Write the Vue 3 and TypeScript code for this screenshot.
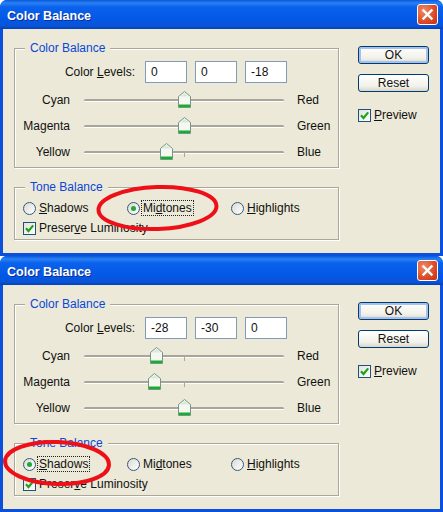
<script setup lang="ts">
interface Mark {
  cx: number
  cy: number
  rx: number
  ry: number
  tilt: number
}

interface Dialog {
  levels: number[]
  tone: string
  mark: Mark
}

const dialogs: Dialog[] = [
  { levels: [0, 0, -18], tone: 'Midtones', mark: { cx: 157.5, cy: 208, rx: 59, ry: 21, tilt: -2 } },
  { levels: [-28, -30, 0], tone: 'Shadows', mark: { cx: 57, cy: 207, rx: 52, ry: 21, tilt: 2 } }
]

const sliders = [
  { left: 'Cyan', right: 'Red' },
  { left: 'Magenta', right: 'Green' },
  { left: 'Yellow', right: 'Blue' }
]

// key is the underlined mnemonic letter
const tones = [
  { name: 'Shadows', pre: '', key: 'S', post: 'hadows' },
  { name: 'Midtones', pre: 'Mi', key: 'd', post: 'tones' },
  { name: 'Highlights', pre: '', key: 'H', post: 'ighlights' }
]

const thumbLeft = (value: number) => `${100 + value}px`
</script>

<template>
  <div class="page">
    <section v-for="(dlg, i) in dialogs" :key="i" class="dialog">
      <header class="titlebar">
        <span class="title">Color Balance</span>
        <button class="close" type="button" aria-label="Close">
          <svg width="13" height="13" viewBox="0 0 13 13">
            <path d="M2.5 2.5 L10.5 10.5 M10.5 2.5 L2.5 10.5" stroke="#fff" stroke-width="2.4" stroke-linecap="square" />
          </svg>
        </button>
      </header>

      <div class="body">
        <div class="main">
          <div class="group color-group">
            <span class="legend">Color Balance</span>
            <div class="levels">
              <span class="levels-label">Color <u>L</u>evels:</span>
              <span v-for="(v, n) in dlg.levels" :key="n" class="field">{{ v }}</span>
            </div>
            <div v-for="(s, n) in sliders" :key="s.left" class="slider-row">
              <span class="slider-left">{{ s.left }}</span>
              <div class="track">
                <i class="tick"></i>
                <svg class="thumb" :style="{ left: thumbLeft(dlg.levels[n]) }" width="13" height="17" viewBox="0 0 13 17">
                  <path d="M6.5 .5 L12.5 5.5 V16.5 H.5 V5.5 Z" fill="#f7f7f2" stroke="#76948a" stroke-linejoin="round" />
                  <path d="M6.5 2 L10.5 5.4 H2.5 Z" fill="#d4ecd4" />
                  <rect x="1" y="13.5" width="11" height="2.5" fill="#12b02c" />
                </svg>
              </div>
              <span class="slider-right">{{ s.right }}</span>
            </div>
          </div>

          <div class="group tone-group">
            <span class="legend">Tone Balance</span>
            <div class="radios">
              <label v-for="t in tones" :key="t.name" class="radio-item">
                <span class="radio" :class="{ on: t.name === dlg.tone }"></span>
                <span class="radio-text" :class="{ focus: t.name === dlg.tone }">{{ t.pre }}<u>{{ t.key }}</u>{{ t.post }}</span>
              </label>
            </div>
            <label class="check-item">
              <span class="check">
                <svg width="11" height="11" viewBox="0 0 11 11">
                  <path d="M2 5.2 L4.5 8 L9.2 2.4" fill="none" stroke="#21a121" stroke-width="2.2" />
                </svg>
              </span>
              <span>Preser<u>v</u>e Luminosity</span>
            </label>
          </div>
        </div>

        <aside class="side">
          <button class="btn default" type="button">OK</button>
          <button class="btn" type="button">Reset</button>
          <label class="check-item">
            <span class="check">
              <svg width="11" height="11" viewBox="0 0 11 11">
                <path d="M2 5.2 L4.5 8 L9.2 2.4" fill="none" stroke="#21a121" stroke-width="2.2" />
              </svg>
            </span>
            <span><u>P</u>review</span>
          </label>
        </aside>
      </div>

      <svg class="mark" width="443" height="256" viewBox="0 0 443 256">
        <ellipse
          :cx="dlg.mark.cx"
          :cy="dlg.mark.cy"
          :rx="dlg.mark.rx"
          :ry="dlg.mark.ry"
          :transform="`rotate(${dlg.mark.tilt} ${dlg.mark.cx} ${dlg.mark.cy})`"
          fill="none"
          stroke="#ee1018"
          stroke-width="4"
        />
      </svg>
    </section>
  </div>
</template>

<style scoped>
.page {
  width: 443px;
  height: 512px;
  overflow: hidden;
  font-family: "Liberation Sans", Arial, sans-serif;
  font-size: 12px;
  color: #111;
}

.dialog {
  position: relative;
  width: 443px;
  height: 256px;
  box-sizing: border-box;
  display: flex;
  flex-direction: column;
  background: #0a50dc;
  border-radius: 7px 7px 0 0;
  overflow: hidden;
}

.titlebar {
  height: 29px;
  flex: none;
  box-sizing: border-box;
  display: flex;
  align-items: center;
  justify-content: space-between;
  padding: 2px 5px 2px 7px;
  background: linear-gradient(#0a58d8 0, #2a80f4 3px, #0a62ec 7px, #0457e6 20px, #0a54d8 26px, #0340b0 29px);
}

.title {
  margin-top: 2px;
  color: #fff;
  font-weight: 700;
  font-size: 12.5px;
  text-shadow: 1px 1px 0 #0a2f90;
}

.close {
  width: 21px;
  height: 21px;
  padding: 0;
  display: flex;
  align-items: center;
  justify-content: center;
  border: 1px solid #fff;
  border-radius: 3px;
  background: radial-gradient(circle at 30% 30%, #ef8a68, #dc4a26 60%, #c23214);
}

.body {
  flex: 1;
  display: flex;
  margin: 0 3px 3px;
  padding: 0 0 0 11px;
  background: #ece9d8;
}

.main {
  width: 325px;
  flex: none;
  padding-top: 19px;
}

.group {
  position: relative;
  box-sizing: border-box;
  border: 1px solid #aca899;
  box-shadow: 1px 1px 0 #fff, inset 1px 1px 0 #fff;
}

.color-group {
  height: 120px;
  padding-top: 12px;
}

.tone-group {
  height: 53px;
  margin-top: 19px;
  padding: 13px 0 0 8px;
}

.legend {
  position: absolute;
  top: -8px;
  left: 10px;
  padding: 0 5px;
  background: #ece9d8;
  color: #0a46d8;
  font-size: 12px;
  line-height: 15px;
}

.levels {
  display: flex;
  align-items: center;
  gap: 8px;
}

.levels-label {
  width: 120px;
  margin-right: 2px;
  padding-bottom: 1px;
  text-align: right;
}

.field {
  width: 42px;
  height: 22px;
  box-sizing: border-box;
  padding-left: 5px;
  border: 1px solid #7f9db9;
  background: #fff;
  line-height: 20px;
}

.slider-row {
  height: 26px;
  display: flex;
  align-items: center;
}

.levels + .slider-row {
  margin-top: 4px;
}

.slider-left {
  width: 55px;
  text-align: right;
}

.track {
  position: relative;
  width: 200px;
  height: 3px;
  margin: 0 13px 0 14px;
  border-radius: 2px;
  background: linear-gradient(#a8a69a 0, #a8a69a 2px, #fff 2px);
}

.tick {
  position: absolute;
  left: 100px;
  top: 0;
  width: 1px;
  height: 6px;
  background: #aca899;
}

.thumb {
  position: absolute;
  top: -8px;
  margin-left: -6px;
}

.radios {
  display: grid;
  grid-template-columns: repeat(3, 104px);
}

.radio-item,
.check-item {
  display: flex;
  align-items: center;
  gap: 3px;
  height: 14px;
}

.radio-item {
  gap: 2px;
}

.tone-group .check-item {
  margin-top: 6px;
}

.radio {
  width: 13px;
  height: 13px;
  flex: none;
  box-sizing: border-box;
  display: flex;
  align-items: center;
  justify-content: center;
  border: 1px solid #2f5b85;
  border-radius: 50%;
  background: linear-gradient(135deg, #dcdad0, #fff);
}

.radio.on::after {
  content: "";
  width: 5px;
  height: 5px;
  border-radius: 50%;
  background: #22a83a;
}

.radio-text {
  padding: 0 1px;
  outline: 1px solid transparent;
}

.radio-text.focus {
  outline: 1px dotted #222;
}

.check {
  width: 13px;
  height: 13px;
  flex: none;
  box-sizing: border-box;
  display: flex;
  align-items: center;
  justify-content: center;
  border: 1px solid #1c5180;
  background: linear-gradient(135deg, #e4e2d8, #fff);
}

.side {
  display: flex;
  flex-direction: column;
  width: 71px;
  margin-left: 19px;
  padding-top: 17px;
}

.btn {
  width: 71px;
  height: 18px;
  padding: 0;
  border: 1px solid #003c74;
  border-radius: 3px;
  background: linear-gradient(#fff, #f2f1e8 70%, #d8d6c8);
  font: inherit;
  color: #111;
  line-height: 14px;
}

.btn.default {
  box-shadow: inset 0 0 0 2px #a8c0ec;
}

.btn + .btn {
  margin-top: 10px;
}

.side .check-item {
  margin-top: 16px;
}

.mark {
  position: absolute;
  top: 0;
  left: 0;
  pointer-events: none;
}
</style>

<style>
html,
body {
  background: #fff;
}
</style>
